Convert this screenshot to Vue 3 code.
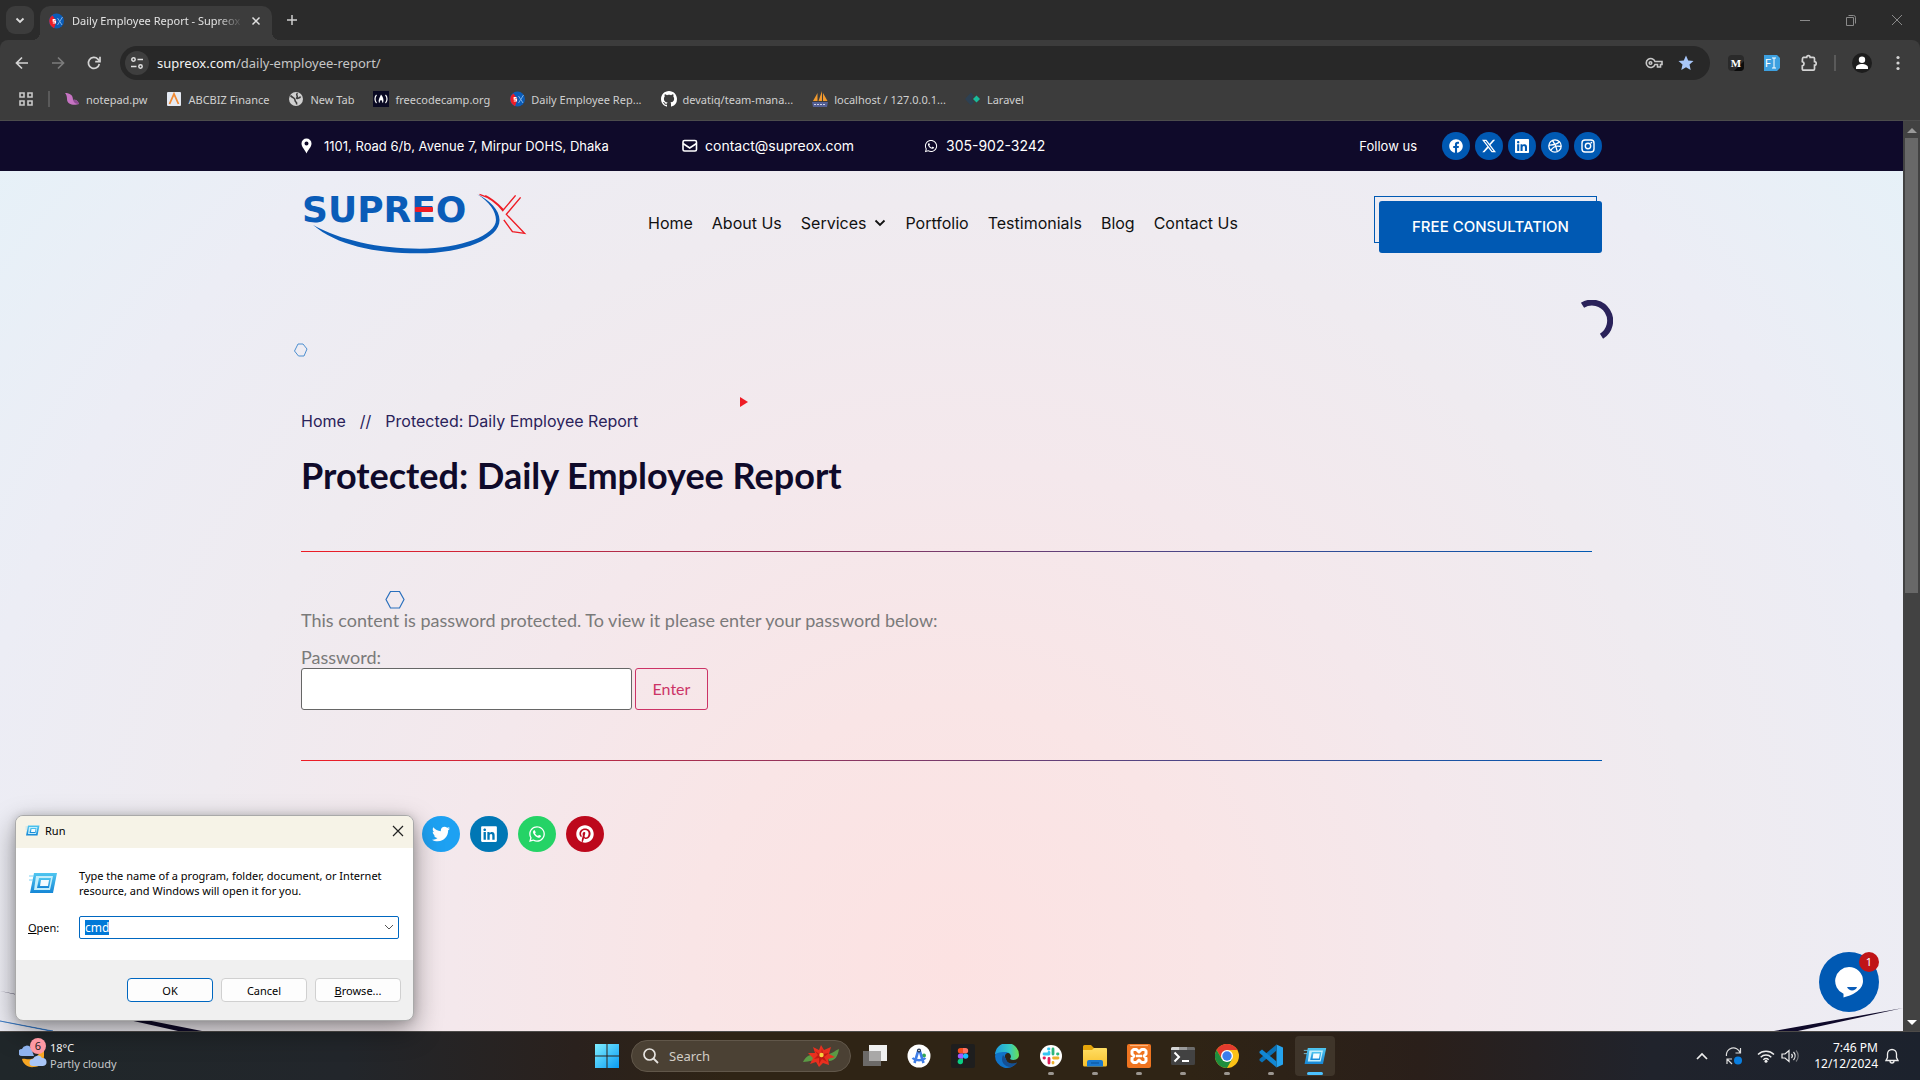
<script setup>
import { ref, onMounted } from 'vue'

const fa = {
  facebook: { box: '0 0 512 512', d: 'M504 256C504 119 393 8 256 8S8 119 8 256c0 123.78 90.69 226.38 209.25 245V327.69h-63V256h63v-54.64c0-62.15 37-96.48 93.67-96.48 27.14 0 55.52 4.84 55.52 4.84v61h-31.28c-30.8 0-40.41 19.12-40.41 38.73V256h68.78l-11 71.69h-57.78V501C413.31 482.38 504 379.78 504 256z' },
  x: { box: '0 0 16 16', d: 'M12.6.75h2.454l-5.36 6.142L16 15.25h-4.937l-3.867-5.07-4.425 5.07H.316l5.733-6.57L0 .75h5.063l3.495 4.633L12.601.75Zm-.86 13.028h1.36L4.323 2.145H2.865z' },
  linkedin: { box: '0 0 448 512', d: 'M416 32H31.9C14.3 32 0 46.5 0 64.3v383.4C0 465.5 14.3 480 31.9 480H416c17.6 0 32-14.5 32-32.3V64.3c0-17.8-14.4-32.3-32-32.3zM135.4 416H69V202.2h66.5V416zm-33.2-243c-21.3 0-38.5-17.3-38.5-38.5S80.9 96 102.2 96c21.2 0 38.5 17.3 38.5 38.5 0 21.3-17.2 38.5-38.5 38.5zm282.1 243h-66.4V312c0-24.8-.5-56.7-34.5-56.7-34.6 0-39.9 27-39.9 54.9V416h-66.4V202.2h63.7v29.2h.9c8.9-16.8 30.6-34.5 62.9-34.5 67.2 0 79.7 44.3 79.7 101.9V416z' },
  whatsapp: { box: '0 0 448 512', d: 'M380.9 97.1C339 55.1 283.2 32 223.9 32c-122.4 0-222 99.6-222 222 0 39.1 10.2 77.3 29.6 111L0 480l117.7-30.9c32.4 17.7 68.9 27 106.1 27h.1c122.3 0 224.1-99.6 224.1-222 0-59.3-25.2-115-67.1-157zm-157 341.6c-33.2 0-65.7-8.9-94-25.7l-6.7-4-69.8 18.3L72 359.2l-4.4-7c-18.5-29.4-28.2-63.3-28.2-98.2 0-101.7 82.8-184.5 184.6-184.5 49.3 0 95.6 19.2 130.4 54.1 34.8 34.9 56.2 81.2 56.1 130.5 0 101.8-84.9 184.6-186.6 184.6zm101.2-138.2c-5.5-2.8-32.8-16.2-37.9-18-5.1-1.9-8.8-2.8-12.5 2.8-3.7 5.6-14.3 18-17.6 21.8-3.2 3.7-6.5 4.2-12 1.4-32.6-16.3-54-29.1-75.5-66-5.7-9.8 5.7-9.1 16.3-30.3 1.8-3.7.9-6.9-.5-9.7-1.4-2.8-12.5-30.1-17.1-41.2-4.5-10.8-9.1-9.3-12.5-9.5-3.2-.2-6.9-.2-10.6-.2-3.7 0-9.7 1.4-14.8 6.9-5.1 5.6-19.4 19-19.4 46.3 0 27.3 19.9 53.7 22.6 57.4 2.8 3.7 39.1 59.7 94.8 83.8 35.2 15.2 49 16.5 66.6 13.9 10.7-1.6 32.8-13.4 37.4-26.4 4.6-13 4.6-24.1 3.2-26.4-1.3-2.5-5-3.9-10.5-6.6z' },
  twitter: { box: '0 0 512 512', d: 'M459.37 151.716c.325 4.548.325 9.097.325 13.645 0 138.72-105.583 298.558-298.558 298.558-59.452 0-114.68-17.219-161.137-47.106 8.447.974 16.568 1.299 25.34 1.299 49.055 0 94.213-16.568 130.274-44.832-46.132-.975-84.792-31.188-98.112-72.772 6.498.974 12.995 1.624 19.818 1.624 9.421 0 18.843-1.3 27.614-3.573-48.081-9.747-84.143-51.98-84.143-102.985v-1.299c13.969 7.797 30.214 12.67 47.431 13.319-28.264-18.843-46.781-51.005-46.781-87.391 0-19.492 5.197-37.36 14.294-52.954 51.655 63.675 129.3 105.258 216.365 109.807-1.624-7.797-2.599-15.918-2.599-24.04 0-57.828 46.782-104.934 104.934-104.934 30.213 0 57.502 12.67 76.67 33.137 23.715-4.548 46.456-13.32 66.599-25.34-7.798 24.366-24.366 44.833-46.132 57.827 21.117-2.273 41.584-8.122 60.426-16.243-14.292 20.791-32.161 39.308-52.628 54.253z' },
  pinterest: { box: '0 0 496 512', d: 'M496 256c0 137-111 248-248 248-25.6 0-50.2-3.9-73.4-11.1 10.1-16.5 25.2-43.5 30.8-65 3-11.6 15.4-59 15.4-59 8.1 15.4 31.7 28.5 56.8 28.5 74.8 0 128.7-68.8 128.7-154.3 0-81.9-66.9-143.2-152.9-143.2-107 0-163.9 71.8-163.9 150.1 0 36.4 19.4 81.7 50.3 96.1 4.7 2.2 7.2 1.2 8.3-3.3.8-3.4 5-20.3 6.9-28.1.6-2.5.3-4.7-1.7-7.1-10.1-12.5-18.3-35.3-18.3-56.6 0-54.7 41.4-107.6 112-107.6 60.9 0 103.6 41.5 103.6 100.9 0 67.1-33.9 113.6-78 113.6-24.3 0-42.6-20.1-36.7-44.8 7-29.5 20.5-61.3 20.5-82.6 0-19-10.2-34.9-31.4-34.9-24.9 0-44.9 25.7-44.9 60.2 0 22 7.4 36.8 7.4 36.8s-24.5 103.8-29 123.2c-5 21.4-3 51.6-.9 71.2C65.4 450.9 0 361.1 0 256 0 119 111 8 248 8s248 111 248 248z' },
}

const shares = ['facebook', 'twitter', 'linkedin', 'whatsapp', 'pinterest']
const command = ref('cmd')
const password = ref('')
const commandBox = ref(null)

onMounted(() => {
  commandBox.value.focus()
  commandBox.value.select()
})
</script>

<template>
  <div class="screen">
    <!-- shared gradients -->
    <svg class="defs" aria-hidden="true">
      <defs>
        <linearGradient id="win" x1="0" y1="0" x2="1" y2="1"><stop offset="0" stop-color="#7eeeff" /><stop offset="1" stop-color="#0a9cf5" /></linearGradient>
        <linearGradient id="runFrame" x1="0" y1="0" x2="0" y2="1"><stop offset="0" stop-color="#4fc6f0" /><stop offset="1" stop-color="#1687d6" /></linearGradient>
        <linearGradient id="edgeTop" x1="0" y1="0" x2="1" y2="0"><stop offset="0" stop-color="#1c9ae0" /><stop offset="0.6" stop-color="#35c9c4" /><stop offset="1" stop-color="#6be04f" /></linearGradient>
        <linearGradient id="folder" x1="0" y1="0" x2="0" y2="1"><stop offset="0" stop-color="#ffdd63" /><stop offset="1" stop-color="#f8c12c" /></linearGradient>
        <symbol id="runIcon" viewBox="0 0 30 22">
          <path d="M6 1h23l-4 20H2z" fill="url(#runFrame)" />
          <path d="M8 4h17l-3 14H6z" fill="#c3eefb" />
          <path d="M11 6h12l-2 10H9z" fill="url(#runFrame)" />
          <path d="M13 8h8l-1 6h-8z" fill="#f4fcff" />
          <path d="M1 4h5M1 8h4" stroke="#7ed3f3" stroke-width="1" />
        </symbol>
        <symbol id="sx" viewBox="0 0 16 16">
          <circle cx="8.500" cy="8" r="7.500" fill="#0a5cb8" />
          <path d="M4.500 2.500C0 5 0 12 6 15.200l2.500-7z" fill="#ee1c25" />
          <path d="M7.500 6.500H5.200v1.700h2.200v1.800H4.800" fill="none" stroke="#fff" stroke-width="1.200" />
          <path d="M9.500 5l4.500 7M14.500 4L9.500 12" stroke="#7fb0e6" stroke-width="1" />
        </symbol>
      </defs>
    </svg>

    <!-- browser -->
    <div class="tabstrip">
      <button class="tab-search" aria-label="Search tabs"><svg width="10" height="10" viewBox="0 0 10 10"><path d="M1.500 3.500 5 7l3.500-3.500" fill="none" stroke="#dcdcdc" stroke-width="1.800" /></svg></button>
      <div class="tab">
        <svg width="16" height="16"><use href="#sx" /></svg>
        <span class="tab-title">Daily Employee Report - Supreox</span>
        <button aria-label="Close tab"><svg width="10" height="10" viewBox="0 0 10 10"><path d="M1.500 1.500l7 7M8.500 1.500l-7 7" stroke="#e0e0e0" stroke-width="1.500" /></svg></button>
      </div>
      <button class="new-tab" aria-label="New tab"><svg width="12" height="12" viewBox="0 0 12 12"><path d="M6 1v10M1 6h10" stroke="#d0d0d0" stroke-width="1.500" /></svg></button>
      <div class="window-buttons">
        <button aria-label="Minimize"><svg width="12" height="12" viewBox="0 0 12 12"><path d="M1 6.500h10" stroke="#8a8a8a" /></svg></button>
        <button aria-label="Restore"><svg width="12" height="12" viewBox="0 0 12 12"><path d="M1.500 3.500h7v8h-7zM3.500 1.500h5a2 2 0 0 1 2 2v6" fill="none" stroke="#8a8a8a" /></svg></button>
        <button aria-label="Close"><svg width="12" height="12" viewBox="0 0 12 12"><path d="M1 1l10 10M11 1L1 11" stroke="#8a8a8a" /></svg></button>
      </div>
    </div>

    <div class="toolbar">
      <button aria-label="Back"><svg width="16" height="16" viewBox="0 0 16 16"><path d="M14 8H3M8 2.500 2.500 8 8 13.500" fill="none" stroke="#d4d4d4" stroke-width="1.700" /></svg></button>
      <button aria-label="Forward"><svg width="16" height="16" viewBox="0 0 16 16"><path d="M2 8h11M8 2.500 13.500 8 8 13.500" fill="none" stroke="#7c7c7c" stroke-width="1.700" /></svg></button>
      <button aria-label="Reload"><svg width="16" height="16" viewBox="0 0 16 16"><path d="M13.300 9a5.500 5.500 0 1 1-1.400-4.900L13.500 6" fill="none" stroke="#d4d4d4" stroke-width="1.700" /><path d="M14 1.800V6.600H9.200" fill="none" stroke="#d4d4d4" stroke-width="1.700" /></svg></button>
      <div class="omnibox">
        <button class="site-info" aria-label="Site information"><svg width="14" height="14" viewBox="0 0 14 14"><g fill="none" stroke="#e0e0e0" stroke-width="1.500"><circle cx="3.500" cy="3.500" r="1.700" /><path d="M7.500 3.500H13M1 10.500h5.500" /><circle cx="10.500" cy="10.500" r="1.700" /></g></svg></button>
        <span class="url">supreox.com<span>/daily-employee-report/</span></span>
        <svg width="18" height="12" viewBox="0 0 18 12"><g fill="none" stroke="#c8c8c8" stroke-width="1.600"><path d="M10 4.500h7v3h-1.500V10h-3V7.500H10a4.500 4.500 0 1 1 0-3z" /><circle cx="5.500" cy="6" r="1.300" /></g></svg>
        <svg class="star" width="16" height="16" viewBox="0 0 16 16"><path d="M8 .500l2.200 5 5.300.500-4 3.600 1.200 5.400L8 12.200 3.300 15l1.200-5.400-4-3.600 5.300-.500z" fill="#a8c7fa" /></svg>
      </div>
      <div class="extensions">
        <svg width="16" height="16" viewBox="0 0 16 16"><rect width="16" height="16" rx="4" fill="#2a2a2a" /><path d="M16 6v6a4 4 0 0 1-4 4H6z" fill="#0c0c0c" /><text x="8" y="12" text-anchor="middle" font-family="Liberation Serif, serif" font-weight="700" font-size="11" fill="#fff">M</text></svg>
        <svg width="16" height="16" viewBox="0 0 16 16"><path d="M0 0h13l3 3v10l-3 3H0z" fill="#3da0e0" /><text x="1" y="12" font-family="Roboto, sans-serif" font-size="11" fill="#fff">F</text><path d="M8 3h4M10 3v10M8 13h4" stroke="#fff" stroke-width="1" /></svg>
        <svg width="18" height="18" viewBox="0 0 18 18"><path d="M2.500 4.500a1.500 1.500 0 0 1 1-1.200h3.200a1.700 1.700 0 0 1 3.400 0h3.100a1.300 1.300 0 0 1 1.300 1.300v3.100a1.700 1.700 0 0 1 0 3.400V15a1.200 1.200 0 0 1-1.200 1.200H3.500A1.200 1.200 0 0 1 2.300 15v-3.100a2.200 2.200 0 0 0 0-4.300z" fill="none" stroke="#d4d4d4" stroke-width="1.700" /></svg>
        <i class="bar"></i>
        <svg width="20" height="20" viewBox="0 0 20 20"><circle cx="10" cy="10" r="10" fill="#1d1d1d" /><circle cx="10" cy="6.800" r="3.200" fill="#fff" /><path d="M4 16v-1.500c0-2 3-3.500 6-3.500s6 1.500 6 3.500V16z" fill="#fff" /></svg>
        <svg class="more" width="4" height="16" viewBox="0 0 4 16"><g fill="#d4d4d4"><circle cx="2" cy="2.500" r="1.600" /><circle cx="2" cy="8" r="1.600" /><circle cx="2" cy="13.500" r="1.600" /></g></svg>
      </div>
    </div>

    <nav class="bookmarks" aria-label="Bookmarks">
      <svg width="14" height="14" viewBox="0 0 14 14"><path d="M1 1h4v4H1zM9 1h4v4H9zM1 9h4v4H1zM9 9h4v4H9z" fill="none" stroke="#c8c8c8" stroke-width="1.600" /></svg>
      <i class="bar"></i>
      <a href="#"><svg width="16" height="16" viewBox="0 0 16 16"><path d="M1 2c5 0 8 2 8 7 3-1 5 1 6 4-3 1-12 2-12-5C3 5 2 3 1 2z" fill="#c774c3" /><path d="M9 9c3-1 5 1 6 4-3 0-5-1-6-4z" fill="#8f4c94" /></svg>notepad.pw</a>
      <a href="#"><svg width="16" height="16" viewBox="0 0 16 16"><rect x="1" y="1" width="14" height="14" rx="1" fill="#e4e9f2" /><path d="M3.500 13 8 3l4.500 10" fill="none" stroke="#f08a33" stroke-width="1.800" /></svg>ABCBIZ Finance</a>
      <a href="#"><svg width="16" height="16" viewBox="0 0 16 16"><circle cx="8" cy="8" r="7" fill="#cfcfcf" /><path d="M2.500 4.500C4 7 7 6 7 9s2.500 1.500 1.500 4.500M9.500 2C7 4 10.500 5 9 6.500s3 1 3.500-1" fill="none" stroke="#3c3c3c" stroke-width="1.600" /></svg>New Tab</a>
      <a href="#"><svg width="16" height="16" viewBox="0 0 16 16"><rect width="16" height="16" fill="#0a0a23" /><path d="M3.500 4C1.500 6 1.500 10 3.500 12M12.500 4c2 2 2 6 0 8" fill="none" stroke="#fff" stroke-width="1.200" /><path d="M8 3.500c2 2 3 5 2.200 8H9c.5-1.500 0-2-1-2.500-1 .5-1.500 1-1 2.500H5.800C5 8.500 7 6.500 8 3.500z" fill="#fff" /></svg>freecodecamp.org</a>
      <a href="#"><svg width="16" height="16"><use href="#sx" /></svg>Daily Employee Rep...</a>
      <a href="#"><svg width="16" height="16" viewBox="0 0 16 16"><path fill="#fff" d="M8 0C3.580 0 0 3.580 0 8c0 3.540 2.290 6.530 5.470 7.590.4.070.55-.17.55-.38 0-.19-.01-.82-.01-1.490-2.010.37-2.530-.49-2.690-.94-.09-.23-.48-.94-.82-1.130-.28-.15-.68-.52-.01-.53.63-.01 1.080.58 1.230.82.72 1.210 1.870.87 2.330.66.070-.52.28-.87.51-1.070-1.780-.2-3.640-.89-3.640-3.950 0-.87.31-1.590.82-2.150-.08-.2-.36-1.020.08-2.120 0 0 .67-.21 2.200.82.64-.18 1.320-.27 2-.27s1.360.09 2 .27c1.530-1.040 2.200-.82 2.200-.82.44 1.100.16 1.920.08 2.120.51.56.82 1.270.82 2.150 0 3.070-1.870 3.750-3.650 3.950.29.25.54.73.54 1.480 0 1.070-.01 1.930-.01 2.200 0 .21.15.46.55.38A8.010 8.010 0 0 0 16 8c0-4.420-3.580-8-8-8z" /></svg>devatiq/team-mana...</a>
      <a href="#"><svg width="16" height="16" viewBox="0 0 16 16"><path d="M5.500 2v8H1zM10 0v10H6.500zM15.500 10H11V2z" fill="#f29a2e" /><path d="M0 11h16l-1 5H1z" fill="#545f94" /><path d="M2 13.500h12" stroke="#cfd3ea" stroke-dasharray="2 1" /></svg>localhost / 127.0.0.1...</a>
      <a href="#"><svg width="16" height="16" viewBox="0 0 16 16"><path d="M6 1.500 0 8l6 6.500L9 11 6.500 8 9 5z" fill="#2d4052" /><path d="M11.500 4.500 15 8l-3.500 3.500L8 8z" fill="#18bc9c" /></svg>Laravel</a>
    </nav>

    <div class="viewport">
      <main class="page">
        <div class="topbar">
          <div class="container topbar-row">
            <ul class="contacts">
              <li class="address"><svg width="16" height="16" viewBox="0 0 16 16"><path fill-rule="evenodd" d="M5.500.500A5 5 0 0 0 .500 5.500c0 3.500 3.300 6 5 10 1.700-4 5-6.500 5-10a5 5 0 0 0-5-5zm0 3a2 2 0 1 1 0 4 2 2 0 0 1 0-4z" fill="#fff" /></svg>1101, Road 6/b, Avenue 7, Mirpur DOHS, Dhaka</li>
              <li><svg width="16" height="16" viewBox="0 0 16 16"><rect x="1" y="2.500" width="13.500" height="10.500" rx="1.500" fill="none" stroke="#fff" stroke-width="1.600" /><path d="M1 5.500 7.700 10l6.800-4.500" fill="none" stroke="#fff" stroke-width="1.600" /></svg>contact@supreox.com</li>
              <li><svg width="16" height="14" :viewBox="fa.whatsapp.box"><path :d="fa.whatsapp.d" fill="#fff" /></svg>305-902-3242</li>
            </ul>
            <div class="follow">
              <span>Follow us</span>
              <a href="#" aria-label="Facebook"><svg width="14" height="14" :viewBox="fa.facebook.box"><path :d="fa.facebook.d" /></svg></a>
              <a href="#" aria-label="X"><svg width="14" height="14" :viewBox="fa.x.box"><path :d="fa.x.d" /></svg></a>
              <a href="#" aria-label="LinkedIn"><svg width="14" height="16" :viewBox="fa.linkedin.box"><path :d="fa.linkedin.d" /></svg></a>
              <a href="#" aria-label="Dribbble"><svg width="14" height="14" viewBox="0 0 14 14"><g fill="none" stroke="#fff" stroke-width="1.300"><circle cx="7" cy="7" r="6.200" /><path d="M4.500 1.500C7 4.500 8.500 8 9.300 12.500M1 6c4 .2 8-.5 10.500-3.500M2.800 11.500C5 7.500 9 6.500 13 7.500" /></g></svg></a>
              <a href="#" aria-label="Instagram"><svg width="14" height="14" viewBox="0 0 14 14"><g fill="none" stroke="#fff" stroke-width="1.400"><rect x="1" y="1" width="12" height="12" rx="3" /><circle cx="7" cy="7" r="2.700" /></g><circle cx="10.400" cy="3.600" r=".9" fill="#fff" /></svg></a>
            </div>
          </div>
        </div>

        <div class="container">
          <header class="site-header">
            <a href="#" class="logo" aria-label="Supreox">
              <svg width="230" height="64" viewBox="0 0 230 64">
                <text x="1" y="30" font-family="DejaVu Sans, sans-serif" font-weight="700" font-size="36" fill="#0a5cb8">SUPREO</text>
                <rect x="114" y="15" width="18" height="5" rx="1" fill="#ee1c25" />
                <g transform="scale(.3571 .3333) translate(-62 -66)">
                  <path d="M96 165C160 225 270 250 390 250 520 250 618 205 618 150 618 120 590 90 555 73 590 95 608 125 608 150 608 195 510 236 395 236 280 236 170 210 96 165Z" fill="#0a5cb8" />
                  <path d="M562 73C590 82 610 98 627 122L663 76M578 77C600 88 615 104 628 118M677 82L637 133L688 190L654 185L630 150" fill="none" stroke="#ee1c25" stroke-width="4" />
                </g>
              </svg>
            </a>
            <nav class="menu" aria-label="Main">
              <a href="#">Home</a>
              <a href="#">About Us</a>
              <a href="#">Services<svg width="12" height="8" viewBox="0 0 12 8"><path d="M1.500 1.500 6 6l4.500-4.500" fill="none" stroke="#111" stroke-width="1.800" /></svg></a>
              <a href="#">Portfolio</a>
              <a href="#">Testimonials</a>
              <a href="#">Blog</a>
              <a href="#">Contact Us</a>
            </nav>
            <div class="cta"><button>FREE CONSULTATION</button></div>
          </header>

          <nav class="crumbs" aria-label="Breadcrumb"><a href="#">Home</a><span>//</span><span>Protected: Daily Employee Report</span></nav>
          <h1>Protected: Daily Employee Report</h1>
          <hr class="first" />
          <form class="protected" @submit.prevent>
            <p>This content is password protected. To view it please enter your password below:</p>
            <label for="pwbox">Password:</label>
            <div class="field">
              <input id="pwbox" v-model="password" type="password" />
              <button>Enter</button>
            </div>
          </form>
          <hr />
          <div class="shares">
            <a v-for="s in shares" :key="s" href="#" :class="s" :aria-label="s"><svg width="18" height="18" :viewBox="fa[s].box"><path :d="fa[s].d" /></svg></a>
          </div>
        </div>

        <svg class="deco hex-small" viewBox="0 0 14 14"><path d="M4 1h5l4 5-3 7H4.500L.500 8z" fill="none" stroke="#4d8fd0" stroke-width="1" /></svg>
        <svg class="deco hex" viewBox="0 0 20 18"><path d="M5.500.500h9l4.500 8-4.500 8.500h-9L1 8.500z" fill="none" stroke="#2a70bd" stroke-width="1.200" /></svg>
        <svg class="deco play" viewBox="0 0 8 10"><path d="M0 0l8 5-8 5z" fill="#ee1c25" /></svg>
        <svg class="deco arc" viewBox="0 0 42 42"><path d="M11.500 5.300A18 18 0 0 1 30.500 36.200" fill="none" stroke="#2a225a" stroke-width="6" /></svg>
        <svg class="deco corner-left" viewBox="0 0 202 41"><path d="M0 1 202 41H178Z" fill="#0f0a2a" /><path d="M0 31 53 41H50Z" fill="#0a5cb8" stroke="#0a5cb8" stroke-width=".5" /></svg>
        <svg class="deco corner-right" viewBox="0 0 129 23"><path d="M129 0 24 23H0Z" fill="#0f0a2a" /></svg>

        <button class="chat" aria-label="Open chat">
          <svg width="30" height="32" viewBox="0 0 30 32"><path d="M15 1a14 14 0 0 0-5.500 26.800V31.500c8-2 19.500-7 19.500-16.500A14 14 0 0 0 15 1z" fill="#fff" /><path d="M13 21h10c-1 4-8 5-10 0z" fill="#0a5cb8" /></svg>
          <span>1</span>
        </button>
      </main>
      <div class="scrollbar">
        <svg width="17" height="17" viewBox="0 0 17 17"><path d="M9 7l5 5H4z" fill="#9a9a9a" /></svg>
        <i></i>
        <svg class="down" width="17" height="17" viewBox="0 0 17 17"><path d="M4 6h10l-5 5z" fill="#fff" /></svg>
      </div>
    </div>

    <!-- Run window -->
    <section class="run" aria-label="Run">
      <header>
        <svg width="15" height="13"><use href="#runIcon" /></svg>
        <span>Run</span>
        <button aria-label="Close"><svg width="12" height="12" viewBox="0 0 12 12"><path d="M1 1l10 10M11 1L1 11" stroke="#222" stroke-width="1.200" /></svg></button>
      </header>
      <div class="run-body">
        <div class="run-text">
          <svg width="30" height="22"><use href="#runIcon" /></svg>
          <p>Type the name of a program, folder, document, or Internet<br />resource, and Windows will open it for you.</p>
        </div>
        <div class="run-open">
          <label for="run-command"><u>O</u>pen:</label>
          <div class="combo">
            <input id="run-command" ref="commandBox" v-model="command" type="text" />
            <svg width="10" height="7" viewBox="0 0 10 7"><path d="M1 1l4 4 4-4" fill="none" stroke="#555" /></svg>
          </div>
        </div>
      </div>
      <footer>
        <button class="default">OK</button>
        <button>Cancel</button>
        <button><u>B</u>rowse...</button>
      </footer>
    </section>

    <!-- taskbar -->
    <footer class="taskbar">
      <div class="weather">
        <div class="weather-icon">
          <svg width="28" height="28" viewBox="0 0 28 28"><path d="M3 17c2-1 5 1 9 0 6-1 9-5 9-10l4 1v6c0 6-4 11-10 11-6 1-11-3-12-8z" fill="#f6a623" /><path d="M3 14a3.500 3.500 0 0 1 0-7 5 5 0 0 1 9-1l3 8z" fill="#8fb3ee" /><path d="M14 24a3.500 3.500 0 0 1 0-7 5 5 0 0 1 9-1 4 4 0 0 1 1 8z" fill="#a9c6f7" /></svg>
          <span>6</span>
        </div>
        <div><b>18°C</b><small>Partly cloudy</small></div>
      </div>

      <div class="apps">
        <button class="start" aria-label="Start"><svg width="24" height="24" viewBox="0 0 24 24"><path d="M0 0h11.500v11.500H0zM12.500 0H24v11.500H12.500zM0 12.500h11.500V24H0zM12.500 12.500H24V24H12.500z" fill="url(#win)" /></svg></button>
        <label class="search">
          <svg width="16" height="16" viewBox="0 0 16 16"><circle cx="6.500" cy="6.500" r="5.500" fill="none" stroke="#e6e3df" stroke-width="1.700" /><path d="M10.500 10.500 15 15" stroke="#e6e3df" stroke-width="1.800" /></svg>
          <input type="text" placeholder="Search" />
          <svg width="36" height="24" viewBox="0 0 36 24"><path d="M0 18c3-6 7-8 12-7l-1 6c-3-1-7 1-11 1zM36 5c-1 7-4 12-10 12l-3-7c5 1 8-3 13-5z" fill="#5b9a45" /><path d="M18 1l3 5 7-3-2 7 6 3-7 2 1 6-6-2-4 4-3-5-6 2 3-6-5-5 7 0-2-6 6 3z" fill="#e8301f" /><path d="M18 11l1-7 1 6 6-1-5 4 3 5-5-3-3 5 0-6-5 1 4-4-3-4z" fill="#c01a12" /><circle cx="18.500" cy="11" r="2.200" fill="#f7d23e" /></svg>
        </label>
        <button aria-label="Task view"><svg width="24" height="24" viewBox="0 0 24 24"><path d="M6 1h18v16H6z" fill="#f0f0f0" /><path d="M0 7h18v15H0z" fill="#6c6a68" /><path d="M6 7h12v10H6z" fill="#a9a8a7" /></svg></button>
        <button aria-label="Android Studio"><svg width="24" height="24" viewBox="0 0 24 24"><circle cx="12" cy="12" r="11.500" fill="#fff" /><circle cx="17" cy="11.500" r="2" fill="#34a853" /><path d="M11.500 6 7.500 19M12.500 6l4 13" stroke="#3f7ee8" stroke-width="2.600" /><path d="M5.500 14c3 3 10 3 13 0" fill="none" stroke="#3f7ee8" stroke-width="2.400" /><circle cx="12" cy="6.500" r="2" fill="#20324e" /><circle cx="12" cy="6.500" r=".8" fill="#fff" /></svg></button>
        <button aria-label="Figma"><svg width="24" height="24" viewBox="0 0 24 24"><rect width="24" height="24" rx="2" fill="#1e1e1e" /><path d="M12 4H9.500a2.700 2.700 0 0 0 0 5.400H12z" fill="#f24e1e" /><path d="M12 4h2.500a2.700 2.700 0 0 1 0 5.400H12z" fill="#ff7262" /><path d="M12 9.400H9.500a2.700 2.700 0 0 0 0 5.400H12z" fill="#a259ff" /><circle cx="14.600" cy="12.100" r="2.700" fill="#1abcfe" /><path d="M12 14.800H9.500a2.700 2.700 0 1 0 2.500 2.700z" fill="#0acf83" /></svg></button>
        <button aria-label="Edge"><svg width="24" height="24" viewBox="0 0 24 24"><path d="M0 12A12 12 0 0 0 22 18.500c-3 2-10 2-11-3C8 11 12 8 14 9.500 12 5 2 4 0 12z" fill="#1173c8" /><path d="M0 11A12 12 0 0 1 24 11c0 5-6 6-9 4 2-2 1-7-5-7S1 9 0 11z" fill="url(#edgeTop)" /><path d="M8 11c-3 6 1 12 8 12 3-1 5-3 6-4.500-4 2-11 1-11-4z" fill="#154f92" /></svg></button>
        <button class="open" aria-label="Slack"><svg width="24" height="24" viewBox="0 0 24 24"><circle cx="12" cy="12" r="11" fill="#fff" /><g fill="none" stroke-width="2.800" stroke-linecap="round"><path d="M10 8.500v.5M10 5h-.500M5 10h5" stroke="#36c5f0" /><path d="M14 5v5M18.500 10h.5" stroke="#2eb67d" /><path d="M14.500 14H19M14 18.500v.5" stroke="#ecb22e" /><path d="M10 14.500V19M5 14h.5" stroke="#e01e5a" /></g></svg></button>
        <button class="open" aria-label="File Explorer"><svg width="24" height="24" viewBox="0 0 24 24"><path d="M0 2.500A1.500 1.500 0 0 1 1.500 1H8l3 3v4H0z" fill="#e5a50a" /><path d="M0 6h9l2-2h12a1 1 0 0 1 1 1v16a1.500 1.500 0 0 1-1.500 1.500h-21A1.500 1.500 0 0 1 0 21z" fill="url(#folder)" /><path d="M4 22.500V18a2 2 0 0 1 2-2h12a2 2 0 0 1 2 2v4.500z" fill="#1979d0" /><path d="M8 19h8" stroke="#0f5ea8" stroke-width="1.400" /></svg></button>
        <button class="open" aria-label="XAMPP"><svg width="24" height="24" viewBox="0 0 24 24"><rect width="24" height="24" rx="2" fill="#ef7420" /><path d="M3 1.500h18" stroke="#f9b37d" stroke-width="1.200" /><path d="M6.500 5.500h3L12 8l2.500-2.500h3l1.500 1.500v3l-2 2 2 2v3l-1.500 1.500h-3L12 16l-2.500 2.500h-3L5 17v-3l2-2-2-2V7z" fill="none" stroke="#fff" stroke-width="3" stroke-linejoin="round" /><path d="M9 12h6" stroke="#fff" stroke-width="2.500" /></svg></button>
        <button class="open" aria-label="Terminal"><svg width="24" height="24" viewBox="0 0 24 24"><path d="M0 4.500A1.500 1.500 0 0 1 1.500 3h21A1.500 1.500 0 0 1 24 4.500v15a1.500 1.500 0 0 1-1.500 1.500h-21A1.500 1.500 0 0 1 0 19.500z" fill="#424242" /><path d="M0 6V4.500A1.500 1.500 0 0 1 1.500 3H8v3z" fill="#d5d5d5" /><path d="M8 3h8v3H8z" fill="#9a9a9a" /><path d="M16 3h6.500A1.500 1.500 0 0 1 24 4.500V6h-8z" fill="#6d6d6d" /><path d="M3.500 8.500 8 13l-4.500 4.500M11 17h7" fill="none" stroke="#fff" stroke-width="2" /></svg></button>
        <button class="open" aria-label="Chrome"><svg width="24" height="24" viewBox="0 0 24 24"><circle cx="12" cy="12" r="12" fill="#fbc116" /><path d="M1.600 6A12 12 0 0 1 22.400 6H12L7 15z" fill="#e33b2e" /><path d="M1.600 6A12 12 0 0 0 12 24l5.200-9H6.800z" fill="#1e8e3e" /><circle cx="12" cy="12" r="6" fill="#fff" /><circle cx="12" cy="12" r="4.700" fill="#3b7ded" /></svg></button>
        <button class="open" aria-label="Visual Studio Code"><svg width="24" height="24" viewBox="0 0 24 24"><path d="M17.500.500 24 3.500v17l-6.500 3V.500z" fill="#25a3ee" /><path d="M17.500.500v6L3 18.500l-2.500-2 0-1.500z" fill="#0a72b8" /><path d="M17.500 23.500v-6L3 5.500.500 7.500V9z" fill="#1287d3" /></svg></button>
        <button class="open active" aria-label="Run"><svg width="24" height="18"><use href="#runIcon" /></svg></button>
      </div>

      <div class="tray">
        <svg width="14" height="9" viewBox="0 0 14 9"><path d="M2 7l5-5 5 5" fill="none" stroke="#eee" stroke-width="1.700" /></svg>
        <svg class="sync" width="18" height="18" viewBox="0 0 18 18"><path d="M1.500 9A7 7 0 0 1 15 5.500M15.500 1v5h-5M2 17v-5h5M2 12l5 5" fill="none" stroke="#ddd" stroke-width="1.200" /><circle cx="13" cy="13.500" r="4" fill="#0a7fe0" /></svg>
        <svg class="wifi" width="18" height="14" viewBox="0 0 18 14"><g fill="none" stroke="#eee" stroke-width="1.400"><path d="M1 5.500a11.500 11.500 0 0 1 16 0M3.700 8.200a7.500 7.500 0 0 1 10.600 0M6.300 10.700a4 4 0 0 1 5.400 0" /></g><circle cx="9" cy="12.200" r="1.500" fill="#eee" /></svg>
        <svg width="18" height="14" viewBox="0 0 18 14"><path d="M1 5h3l4-3.500v11L4 9H1zM10.500 5a3 3 0 0 1 0 4M12.500 3a6 6 0 0 1 0 8" fill="none" stroke="#eee" stroke-width="1.200" /><path d="M15 1.500a8 8 0 0 1 0 11" fill="none" stroke="#77797d" stroke-width="1.200" /></svg>
        <div class="clock">7:46 PM<br />12/12/2024</div>
        <svg width="14" height="16" viewBox="0 0 14 16"><path d="M1 12.500h12l-1.500-3V6a4.500 4.500 0 0 0-9 0v3.500zM5 13a2 2 0 0 0 4 0" fill="none" stroke="#eee" stroke-width="1.300" /></svg>
      </div>
    </footer>
  </div>
</template>

<style>
body { margin: 0; background: #2b2b2b; }
</style>

<style scoped>
* { box-sizing: border-box; }
.screen { position: relative; min-height: 100vh; display: flex; flex-direction: column; font-family: "Noto Sans", sans-serif; font-size: 11px; overflow: hidden; }
.defs { position: absolute; width: 0; height: 0; }
svg { display: block; flex: none; }
button { border: 0; padding: 0; background: none; font: inherit; color: inherit; display: flex; align-items: center; justify-content: center; }
a { color: inherit; text-decoration: none; }
ul { list-style: none; margin: 0; padding: 0; }

/* tabs */
.tabstrip { height: 40px; background: #2b2b2b; display: flex; align-items: flex-end; padding-left: 6px; }
.tab-search { width: 28px; height: 28px; border-radius: 9px; background: #3c3c3c; margin: 0 6px 6px 0; }
.tab { position: relative; width: 232px; height: 34px; background: #3c3c3c; border-radius: 10px 10px 0 0; display: flex; align-items: center; gap: 8px; padding: 0 11px 5px 8px; color: #e3e3e3; }
.tab::before, .tab::after { content: ""; position: absolute; bottom: 0; width: 8px; height: 8px; }
.tab::before { left: -8px; background: radial-gradient(circle at 0 0, transparent 8px, #3c3c3c 8px); }
.tab::after { right: -8px; background: radial-gradient(circle at 100% 0, transparent 8px, #3c3c3c 8px); }
.tab-title { flex: 1; overflow: hidden; white-space: nowrap; -webkit-mask-image: linear-gradient(90deg, #000 85%, transparent); mask-image: linear-gradient(90deg, #000 85%, transparent); }
.new-tab { width: 28px; height: 28px; margin: 0 0 6px 6px; }
.window-buttons { margin-left: auto; display: flex; height: 40px; }
.window-buttons button { width: 46px; height: 40px; }

/* toolbar */
.toolbar { height: 46px; background: #3c3c3c; border-radius: 8px 8px 0 0; display: flex; align-items: center; padding: 0 20px 0 14px; }
.toolbar > button { width: 16px; height: 16px; margin-right: 20px; }
.omnibox { flex: 1; height: 34px; margin-left: -2px; background: #282828; border-radius: 17px; display: flex; align-items: center; padding: 0 16px 0 5px; }
.site-info { width: 24px; height: 24px; border-radius: 50%; background: #3e3e3e; margin-right: 8px; }
.url { flex: 1; font-size: 13px; color: #f2f2f2; }
.url span { color: #c6c6c6; }
.star { margin-left: 15px; }
.extensions { display: flex; align-items: center; gap: 20px; margin-left: 18px; }
.extensions .more { margin-left: 4px; }
.bar { width: 2px; height: 16px; background: #5a5a5a; }
.extensions .bar { margin: 0 -4px; }
.bookmarks { height: 35px; background: #3c3c3c; border-bottom: 1px solid #4c4c4c; display: flex; align-items: center; padding: 0 0 8px 19px; color: #d0d0d0; }
.bookmarks .bar { margin: 0 14px 0 15px; }
.bookmarks a { display: flex; align-items: center; gap: 6px; margin-right: 19px; }

/* page */
.viewport { flex: 1; display: flex; }
.page { position: relative; flex: 1; overflow: hidden; background: radial-gradient(circle at 50% 840px, #fce2e2 0, #f9e5e6 260px, #f4e8ec 500px, #efebf0 760px, #ecedf5 1000px, #e6f1f8 1250px); }
.container { max-width: 1301px; margin: 0 auto; }
.topbar { background: #0f0a2a; color: #fff; font-family: Inter, sans-serif; }
.topbar-row { display: flex; justify-content: space-between; align-items: center; height: 50px; }
.contacts { display: grid; grid-template-columns: 381px 241px auto; font-size: 14px; line-height: 18px; padding-bottom: 1px; }
.contacts li { display: flex; align-items: center; gap: 7px; }
.contacts .address { font-size: 13px; }
.follow { display: flex; align-items: center; gap: 5px; font-size: 13px; }
.follow span { margin-right: 20px; }
.follow a { width: 28px; height: 28px; border-radius: 50%; background: #0059b3; display: grid; place-items: center; fill: #fff; }
.site-header { display: flex; align-items: center; padding-top: 21px; font-family: Inter, sans-serif; }
.logo svg { overflow: visible; }
.menu { display: flex; gap: 19px; margin-left: 117px; padding-bottom: 2px; font-size: 16px; color: #111; }
.menu a { display: flex; align-items: center; gap: 8px; line-height: 24px; }
.cta { position: relative; margin-left: auto; padding: 5px 0 0 5px; }
.cta::before { content: ""; position: absolute; inset: 0 5px 10px 0; border: 1px solid #0059b3; }
.cta button { position: relative; width: 223px; height: 52px; background: #0059b3; color: #fff; border-radius: 3px; font-size: 15px; font-weight: 500; }
.crumbs { display: flex; gap: 14px; margin-top: 153px; font: 16px/24px Inter, sans-serif; color: #2a225a; }
h1 { margin: 20px 0 54px; font: 700 36px/44px Lato, sans-serif; color: #0f0a2a; }
hr { margin: 0; border: 0; height: 1px; background: linear-gradient(90deg, #ee1c25, #0059b3); }
hr.first { margin-right: 10px; }
.protected { padding: 55px 0 50px; font: 18px/27px Lato, sans-serif; color: #7a7a7a; }
.protected p { margin: 0 0 13px; }
.protected label { display: block; line-height: 21px; }
.field { display: flex; gap: 3px; }
.field input { width: 331px; height: 42px; border: 1px solid #666; border-radius: 3px; background: #fff; padding: 0 16px; }
.field button { width: 73px; height: 42px; border: 1px solid #c36; border-radius: 3px; color: #c36; font-size: 16px; line-height: 20px; padding-bottom: 1px; }
.shares { display: flex; gap: 10px; padding: 55px 0 0 73px; }
.shares a { width: 38px; height: 36px; border-radius: 50%; display: grid; place-items: center; fill: #fff; }
.facebook { background: #3b5998; }
.twitter { background: #1da1f2; }
.linkedin { background: #0077b5; }
.whatsapp { background: #25d366; }
.pinterest { background: #bd081c; }

.deco { position: absolute; }
.hex-small { left: 294px; top: 222px; width: 14px; height: 14px; }
.hex { left: 385px; top: 470px; width: 20px; height: 18px; }
.play { left: 740px; top: 276px; width: 8px; height: 10px; }
.arc { right: 290px; top: 179px; width: 42px; height: 42px; }
.corner-left { left: 0; bottom: 0; width: 202px; height: 41px; }
.corner-right { right: 0; bottom: 0; width: 129px; height: 23px; }
.chat { position: absolute; right: 24px; bottom: 19px; width: 60px; height: 60px; border-radius: 50%; background: #0059b3; }
.chat span { position: absolute; right: 0; top: 0; width: 20px; height: 20px; border-radius: 50%; background: #c01417; color: #fff; line-height: 20px; }

.scrollbar { width: 17px; background: #424242; display: flex; flex-direction: column; align-items: center; }
.scrollbar i { width: 13px; height: 50%; background: #686868; }
.scrollbar .down { margin-top: auto; }

/* run window */
.run { position: absolute; left: 15px; bottom: 59px; width: 399px; border: 1px solid #a9a9a9; border-radius: 8px; background: #f0f0f0; color: #000; overflow: hidden; line-height: 15px; }
.run { box-shadow: 0 10px 28px rgba(0, 0, 0, 0.4), 0 0 8px rgba(0, 0, 0, 0.15); }
.run header { height: 32px; background: #f6f3e7; display: flex; align-items: center; gap: 5px; padding: 0 9px 3px 9px; }
.run header button { margin-left: auto; }
.run-body { height: 112px; background: #fff; padding: 20px 14px 0 12px; }
.run-text { display: flex; align-items: center; gap: 21px; }
.run-text p { margin: 0; white-space: nowrap; }
.run-open { display: flex; align-items: center; margin-top: 18px; }
.run-open label { width: 51px; }
.combo { flex: 1; height: 23px; border: 1px solid #0067c0; border-radius: 2px; display: flex; align-items: center; padding: 0 4px 0 5px; }
.combo input { flex: 1; border: 0; outline: 0; padding: 0; font: 12px/15px "Noto Sans", sans-serif; background: none; }
.combo input::selection { background: #0078d7; color: #fff; }
.run footer { display: flex; justify-content: flex-end; gap: 8px; padding: 18px 12px 18px; }
.run footer button { display: block; width: 86px; height: 24px; border: 1px solid #d0d0d0; border-radius: 4px; background: #fdfdfd; }
.run footer .default { border-color: #0067c0; }

/* taskbar */
.taskbar { height: 49px; border-top: 1px solid #4d4b49; display: grid; grid-template-columns: 1fr auto 1fr; align-items: center; color: #fff; background: linear-gradient(90deg, #20272a 0, #22262b 18%, #2a211d 30%, #2f2415 38%, #2f2415 62%, #2a1f1a 74%, #20232c 86%, #1c222d 100%); }
.weather { display: flex; align-items: center; gap: 3px; padding-left: 19px; line-height: 16px; }
.weather-icon { position: relative; }
.weather-icon span { position: absolute; left: 11px; top: -4px; width: 16px; height: 16px; border-radius: 50%; background: #fd98a3; color: #222; text-align: center; }
.weather b, .weather small { display: block; font: 11px/16px "Noto Sans", sans-serif; }
.weather small { color: #c6c8ca; }
.apps { display: flex; align-items: center; }
.apps button { position: relative; width: 44px; height: 48px; }
.apps .start { width: 48px; }
.search { width: 220px; height: 32px; margin-right: 2px; border: 1px solid #61574a; border-radius: 16px; background: #4b4134; display: flex; align-items: center; gap: 10px; padding: 0 11px; }
.search input { flex: 1; min-width: 0; border: 0; padding: 0; background: none; font: 13px "Noto Sans", sans-serif; color: #fff; }
.search input::placeholder { color: #d2cdc6; opacity: 1; }
.apps .open::after { content: ""; position: absolute; left: 19px; bottom: 5px; width: 6px; height: 3px; border-radius: 2px; background: #9b9690; }
.apps .active { width: 40px; height: 40px; margin: 0 2px; border-radius: 4px; background: #3f352a; }
.apps .active::after { left: 12px; bottom: 1px; width: 16px; background: #4cc2ff; }
.tray { display: flex; align-items: center; justify-content: flex-end; padding-right: 21px; }
.tray .sync { margin-left: 16px; }
.tray .wifi { margin: 0 6px 0 14px; }
.clock { width: 79px; margin-right: 7px; text-align: right; font-size: 12px; line-height: 16px; }
</style>
